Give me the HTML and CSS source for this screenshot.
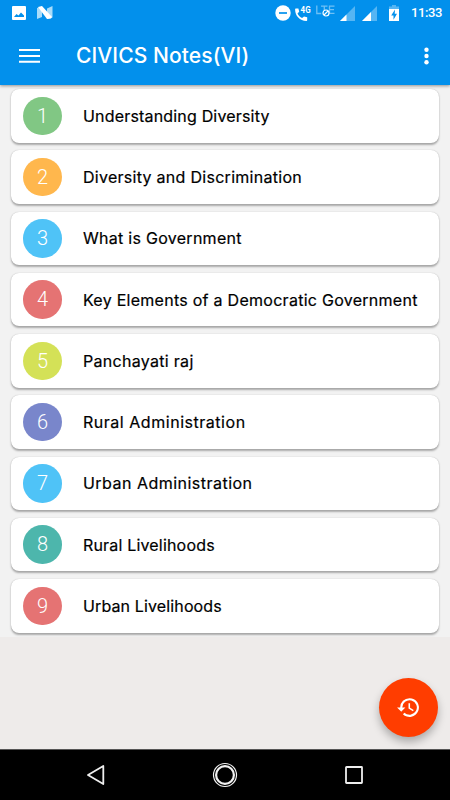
FILE: index.html
```html
<!DOCTYPE html>
<html lang="en">
<head>
<meta charset="utf-8">
<title>CIVICS Notes(VI)</title>
<link rel="stylesheet" href="styles.css">
</head>
<body>
<div class="screen">
  <header class="appbar">
    <div class="status">
      <svg class="s-photo" width="14" height="14" viewBox="0 0 14 14"><path fill="#fff" fill-rule="evenodd" d="M1 0h12a1 1 0 0 1 1 1v12a1 1 0 0 1-1 1H1a1 1 0 0 1-1-1V1a1 1 0 0 1 1-1zM2 11h10V9.500L9 6.500 6.500 9.500 4.500 8z"/></svg>
      <svg class="s-n" width="16" height="14" viewBox="0 0 16 14"><path fill="#a9dcfa" d="M0 2l5-1.500V11L0 13zM10 2.500L15.500 0v11.500L10 13z"/><path fill="#fff" d="M1 1l4-1 10 11-1 1.500-4 .500z"/></svg>
      <span class="spacer"></span>
      <svg class="s-dnd" width="16" height="16" viewBox="0 0 16 16"><circle cx="8" cy="8" r="7.700" fill="#fff"/><path stroke="#0290ec" stroke-width="1.700" d="M4 8h8"/></svg>
      <svg class="s-call" width="17" height="16" viewBox="0 0 17 16"><path fill="#fff" d="M.8 3.600h2.600l.8 3.200-1.700 1.600c1.100 2.100 2.500 3.500 4.600 4.600L9 11.400l3.200.8v3c0 .4-.3.700-.7.700C5 16 .1 11 .1 4.500c0-.5.200-.9.700-.9z"/><text x="5.600" y="7.800" textLength="10" lengthAdjust="spacingAndGlyphs" class="tiny">4G</text></svg>
      <svg class="s-lte" width="19" height="14" viewBox="0 0 19 14"><path fill="none" stroke="#6fc0f5" stroke-width="1.300" d="M.8.500v8h4.500M5 1.200h6.500M8.300 1v7.500M18.500 1.200h-5v7.200h5M13.500 4.700h4.500"/><circle cx="10" cy="8" r="3" fill="#0290ec" stroke="#fff" stroke-width="1.200"/><path stroke="#fff" stroke-width="1.100" d="M8 10l4-4"/></svg>
      <svg class="s-sig" width="15" height="15" viewBox="0 0 15 15"><path fill="#55b5f3" d="M15 0v15H0z"/><path fill="#fff" d="M6.500 8.500V15H0z"/></svg>
      <svg class="s-sig2" width="15" height="15" viewBox="0 0 15 15"><path fill="#55b5f3" d="M15 0v15H0z"/><path fill="#fff" d="M9 6v9H0z"/></svg>
      <svg class="s-bat" width="10" height="16" viewBox="0 0 10 16"><path fill="#55b5f3" d="M3 0h4v1.500h3V4H0V1.500h3z"/><path fill="#fff" d="M0 4h10v12H0z"/><path fill="#0290ec" d="M6 4.500L2.200 10.500h2.300v4.300L8 8.800H5.700z"/></svg>
      <span class="clock">11:33</span>
    </div>
    <div class="toolbar">
      <svg class="menu" width="21" height="14" viewBox="0 0 21 14"><path fill="#fff" d="M0 0h21v2H0zM0 5.900h21v2H0zM0 11.800h21v2H0z"/></svg>
      <h1 class="title">CIVICS Notes(VI)</h1>
      <svg class="more" width="5" height="18" viewBox="0 0 5 18"><g fill="#fff"><circle cx="2.500" cy="2.700" r="2.200"/><circle cx="2.500" cy="9" r="2.200"/><circle cx="2.500" cy="15.300" r="2.200"/></g></svg>
    </div>
  </header>
  <main class="body">
    <ul class="list">
      <li class="card"><span class="num green">1</span><span class="label l1">Understanding Diversity</span></li>
      <li class="card"><span class="num orange">2</span><span class="label l2">Diversity and Discrimination</span></li>
      <li class="card"><span class="num sky">3</span><span class="label l3">What is Government</span></li>
      <li class="card"><span class="num red">4</span><span class="label l4">Key Elements of a Democratic Government</span></li>
      <li class="card"><span class="num lime">5</span><span class="label l5">Panchayati raj</span></li>
      <li class="card"><span class="num indigo">6</span><span class="label l6">Rural Administration</span></li>
      <li class="card"><span class="num sky">7</span><span class="label l7">Urban Administration</span></li>
      <li class="card"><span class="num teal">8</span><span class="label l8">Rural Livelihoods</span></li>
      <li class="card"><span class="num red">9</span><span class="label l9">Urban Livelihoods</span></li>
    </ul>
    <button class="fab" aria-label="History"><svg width="25" height="25" viewBox="0 0 24 24"><path fill="#fff" d="M13 3a9 9 0 0 0-9 9H1l3.890 3.890.07.140L9 12H6a7 7 0 1 1 2.060 4.940l-1.420 1.420A9 9 0 1 0 13 3zm-1 5v5l4.280 2.540.720-1.210-3.500-2.080V8z"/></svg></button>
  </main>
  <nav class="nav">
    <svg width="18" height="20" viewBox="0 0 18 20"><path fill="none" stroke="#eee" stroke-width="1.800" stroke-linejoin="round" d="M16.300 1v18L1 10z"/></svg>
    <svg width="26" height="26" viewBox="0 0 26 26"><g fill="none" stroke="#f2f2f2"><circle cx="13" cy="13" r="11.500" stroke-width="1.200"/><circle cx="13" cy="13" r="8.900" stroke-width="2.200"/></g></svg>
    <svg width="18" height="18" viewBox="0 0 18 18"><rect x="1" y="1" width="16" height="16" rx=".5" fill="none" stroke="#eee" stroke-width="1.800"/></svg>
  </nav>
</div>
</body>
</html>
```
FILE: styles.css
```css
* { box-sizing: border-box; }
body { margin: 0; background: #eeebea; }
svg { display: block; flex: none; }
.screen { width: 450px; height: 800px; display: flex; flex-direction: column; overflow: hidden; }

.appbar { height: 85px; flex: none; background: #0290ec; color: #fff; box-shadow: 0 1px 3px rgba(0,0,0,.4); z-index: 1; }
.status { height: 26px; padding: 0 8px 0 12px; display: flex; align-items: center; }
.s-n { margin-left: 11px; }
.spacer { flex: 1; }
.s-call { margin-left: 4px; }
.s-lte { margin: 0 0 2px 4px; }
.s-sig { margin: 0 0 0 5px; }
.s-sig2 { margin: 0 0 0 7px; }
.s-bat { margin-left: 12px; }
.clock { width: 31px; margin-left: 12px; font: 500 13px/26px Roboto, sans-serif; white-space: nowrap; letter-spacing: -.4px; }
.tiny { font: 700 9.500px Roboto, sans-serif; fill: #fff; }
.toolbar { height: 59px; padding: 0 21px 0 19px; display: flex; align-items: center; }
.title { flex: 1; margin: 0 0 0 36px; font: 500 21px/30px Inter, sans-serif; letter-spacing: .1px; }

.body { position: relative; flex: 1; background: #eeebea; }
.list { list-style: none; margin: 0; height: 552px; padding: 4px 11px 0; background: #f2f2f2; display: flex; flex-direction: column; gap: 7.750px; }
.card { height: 53.500px; flex: none; display: flex; align-items: center; padding-left: 12.300px; border-radius: 8px; background: #fff; box-shadow: 0 1.500px 2px rgba(0,0,0,.3), 0 0 1px rgba(0,0,0,.18); }
.num { width: 38.500px; height: 38.500px; border-radius: 50%; color: #fff; text-align: center; font: 300 20px/39px Roboto, sans-serif; }
.green { background: #81c784; }
.orange { background: #ffb74d; }
.sky { background: #4fc3f7; }
.red { background: #e57373; }
.lime { background: #d4e157; }
.indigo { background: #7986cb; }
.teal { background: #4db6ac; }
.label { margin-left: 21.200px; font: 400 16px/24px Inter, sans-serif; color: #000; white-space: nowrap; -webkit-text-stroke: .2px #000; }
.l1 { letter-spacing: .18px; }
.l2 { letter-spacing: .28px; }
.l3 { letter-spacing: .28px; }
.l4 { letter-spacing: .27px; }
.l5 { letter-spacing: .3px; }
.l6 { letter-spacing: .53px; }
.l7 { letter-spacing: .48px; }
.l8 { letter-spacing: .18px; }
.l9 { letter-spacing: .13px; }

.fab { position: absolute; right: 11.800px; bottom: 11.800px; width: 59.500px; height: 59.500px; padding: 0; border: 0; border-radius: 50%; background: #ff3d00; display: grid; place-items: center; box-shadow: 0 5px 9px rgba(0,0,0,.28); }
.nav { height: 51px; flex: none; border-top: 1px solid #555; background: #000; display: flex; align-items: center; justify-content: space-between; padding: 0 87px; }
```
